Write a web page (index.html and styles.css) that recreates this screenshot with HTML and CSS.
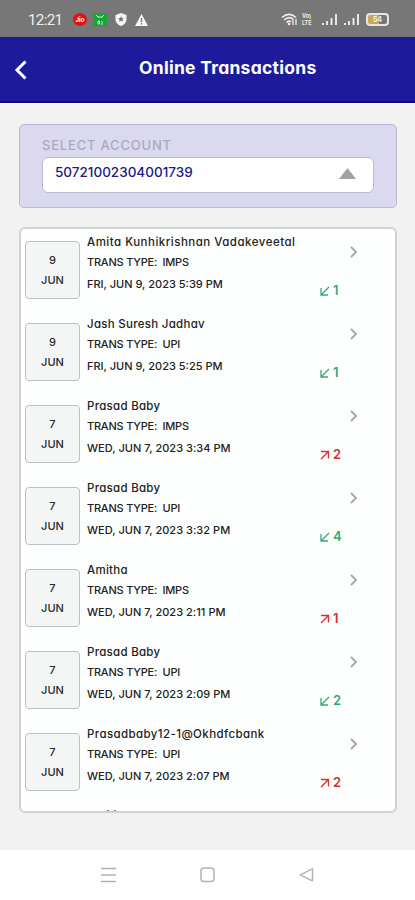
FILE: index.html
```html
<!DOCTYPE html>
<html lang="en">
<head>
<meta charset="utf-8">
<title>Online Transactions</title>
<link rel="stylesheet" href="styles.css">
</head>
<body>
<svg width="0" height="0" class="defs">
  <symbol id="chevron" viewBox="0 0 10 14"><path d="M2 2l5 5-5 5" fill="none" stroke="#a5a5a5" stroke-width="1.8"/></symbol>
  <symbol id="in" viewBox="0 0 10 10"><path d="M9 1L1.5 8.500M1 2v7h7" fill="none" stroke="currentColor" stroke-width="1.3"/></symbol>
  <symbol id="out" viewBox="0 0 10 10"><path d="M1 9l7.500-7.500M1 1.500h7.500v7" fill="none" stroke="currentColor" stroke-width="1.3"/></symbol>
  <symbol id="signal" viewBox="0 0 17 13"><path d="M1 10v2M5 8v4M9.500 5v7M14 1v11" fill="none" stroke="#f2f2f2" stroke-width="1.8"/></symbol>
</svg>
<div class="status">
  <span class="clock">12:21</span>
  <span class="jio">Jio</span>
  <span class="green"><svg width="14" height="14" viewBox="0 0 14 14"><path d="M3 2l3 3M11 2L8 5M5 4h4M5 8v3h1.500V8zM9 8v4" fill="none" stroke="#b4f0bd" stroke-width="1"/></svg></span>
  <svg class="shield" width="12" height="13" viewBox="0 0 12 13"><path d="M6 0l5.500 2v4.500C11.500 9.500 9 12 6 13 3 12 .5 9.500.5 6.500V2z" fill="#f7f7f7"/><path d="M6 3.200l.9 1.800 2 .3-1.400 1.400.3 2L6 7.800l-1.800.9.3-2-1.400-1.400 2-.3z" fill="#777"/></svg>
  <svg width="13" height="12" viewBox="0 0 13 12"><path d="M6.500 0L13 12H0z" fill="#f7f7f7"/><path d="M6.500 4v4M6.500 9v1.500" stroke="#777" stroke-width="1.300"/></svg>
  <span class="right">
    <svg width="17" height="13" viewBox="0 0 17 13"><g fill="none" stroke="#eee" stroke-width="1.600"><path d="M1 4.500Q8 -1.800 15 4.500M3.200 7Q8 2.500 12.500 6.500M5.500 9.500Q8 7 10 9"/></g><circle cx="8" cy="11" r="1.300" fill="#eee"/><path d="M12 12V7M15 6v6" stroke="#eee" stroke-width="1.300"/></svg>
    <span class="volte"><span>Vo)</span><span>LTE</span></span>
    <svg width="17" height="13"><use href="#signal"/></svg>
    <svg class="sig2" width="17" height="13"><use href="#signal"/></svg>
    <span class="battery"><span>54</span></span>
  </span>
</div>
<header>
  <svg width="14" height="20" viewBox="0 0 14 20"><path d="M11.500 1.500L3 10l8.500 8.500" fill="none" stroke="#fff" stroke-width="3"/></svg>
  <h1>Online Transactions</h1>
</header>
<main>
  <section class="account">
    <label>SELECT ACCOUNT</label>
    <div class="select"><span>50721002304001739</span><svg width="17" height="11" viewBox="0 0 17 11"><path d="M8.500 0L17 11H0z" fill="#a1a1a1"/></svg></div>
  </section>
  <section class="list">
    <article><div class="date"><span>9</span><span>JUN</span></div><div class="info"><p class="name n1">Amita Kunhikrishnan Vadakeveetal</p><p class="type">TRANS TYPE:&nbsp; IMPS</p><p class="time fri">FRI, JUN 9, 2023 5:39 PM</p></div><div class="side"><svg class="chev"><use href="#chevron"/></svg><span class="amt in"><svg><use href="#in"/></svg>1</span></div></article>
    <article><div class="date"><span>9</span><span>JUN</span></div><div class="info"><p class="name">Jash Suresh Jadhav</p><p class="type">TRANS TYPE:&nbsp; UPI</p><p class="time fri">FRI, JUN 9, 2023 5:25 PM</p></div><div class="side"><svg class="chev"><use href="#chevron"/></svg><span class="amt in"><svg><use href="#in"/></svg>1</span></div></article>
    <article><div class="date"><span>7</span><span>JUN</span></div><div class="info"><p class="name">Prasad Baby</p><p class="type">TRANS TYPE:&nbsp; IMPS</p><p class="time">WED, JUN 7, 2023 3:34 PM</p></div><div class="side"><svg class="chev"><use href="#chevron"/></svg><span class="amt out"><svg><use href="#out"/></svg>2</span></div></article>
    <article><div class="date"><span>7</span><span>JUN</span></div><div class="info"><p class="name">Prasad Baby</p><p class="type">TRANS TYPE:&nbsp; UPI</p><p class="time">WED, JUN 7, 2023 3:32 PM</p></div><div class="side"><svg class="chev"><use href="#chevron"/></svg><span class="amt in"><svg><use href="#in"/></svg>4</span></div></article>
    <article><div class="date"><span>7</span><span>JUN</span></div><div class="info"><p class="name">Amitha</p><p class="type">TRANS TYPE:&nbsp; IMPS</p><p class="time">WED, JUN 7, 2023 2:11 PM</p></div><div class="side"><svg class="chev"><use href="#chevron"/></svg><span class="amt out"><svg><use href="#out"/></svg>1</span></div></article>
    <article><div class="date"><span>7</span><span>JUN</span></div><div class="info"><p class="name">Prasad Baby</p><p class="type">TRANS TYPE:&nbsp; UPI</p><p class="time">WED, JUN 7, 2023 2:09 PM</p></div><div class="side"><svg class="chev"><use href="#chevron"/></svg><span class="amt in"><svg><use href="#in"/></svg>2</span></div></article>
    <article><div class="date"><span>7</span><span>JUN</span></div><div class="info"><p class="name n7">Prasadbaby12-1@Okhdfcbank</p><p class="type">TRANS TYPE:&nbsp; UPI</p><p class="time">WED, JUN 7, 2023 2:07 PM</p></div><div class="side"><svg class="chev"><use href="#chevron"/></svg><span class="amt out"><svg><use href="#out"/></svg>2</span></div></article>
    <div class="more"><i></i><i></i></div>
  </section>
</main>
<nav>
  <svg width="15" height="16" viewBox="0 0 15 16"><path d="M0 1.500h15M0 8h15M0 14.500h15" stroke="#b2b2b2" stroke-width="1.500"/></svg>
  <svg width="15" height="16" viewBox="0 0 15 16"><rect x="1" y="1" width="13" height="13.500" rx="3" fill="none" stroke="#b2b2b2" stroke-width="1.500"/></svg>
  <svg width="15" height="16" viewBox="0 0 15 16"><path d="M13.500 1.800v12L1.200 7.800z" fill="none" stroke="#b2b2b2" stroke-width="1.400" stroke-linejoin="round"/></svg>
</nav>
</body>
</html>
```
FILE: styles.css
```css
* { box-sizing: border-box; }
body { margin: 0; width: 415px; height: 900px; overflow: hidden; display: flex; flex-direction: column; background: #f1f1f1; font-family: Inter, "Liberation Sans", sans-serif; font-feature-settings: "cv11"; }
p, h1 { margin: 0; }
svg { display: block; flex: none; }
.defs { position: absolute; }
.status { height: 37px; flex: none; background: #777; display: flex; align-items: center; padding: 2px 26px 0 28px; }
.clock { font: 15px Roboto, sans-serif; color: #eee; width: 45px; letter-spacing: -.6px; }
.jio { width: 14px; height: 13px; border-radius: 50%; background: #df1018; color: #fff; font-size: 6px; font-weight: 700; line-height: 13px; text-align: center; }
.green { margin: 0 8px 0 6px; width: 14px; height: 13px; border-radius: 2px; background: #18a53c; }
.shield { margin-right: 8px; }
.right { margin-left: auto; display: flex; align-items: center; }
.volte { margin: 0 6px 0 4px; width: 14px; display: flex; flex-direction: column; font-size: 5.5px; font-weight: 700; line-height: 7px; color: #eee; }
.sig2 { margin-left: 5px; }
.battery { margin-left: 5px; width: 23px; height: 13px; border: 2px solid #e6e6e6; border-radius: 4px; background: linear-gradient(90deg, #c9a957 60%, #777 60%); }
.battery span { display: block; font-size: 7px; line-height: 9px; font-weight: 700; color: #eee; text-align: center; }
header { height: 66px; flex: none; background: #1d1b9b; border-bottom: 2px solid #0b0786; display: flex; align-items: center; padding-left: 14px; }
header svg { margin-top: 2px; }
h1 { margin-left: 111px; margin-top: -2px; color: #fff; font-size: 17.500px; font-weight: 700; line-height: 24px; letter-spacing: .27px; white-space: nowrap; }
main { flex: 1; padding: 20px 18px 0 19px; border-top: 1px solid #fff; }
.account { height: 84px; border: 1px solid #bab7d9; border-radius: 5px; background: #dad9ef; padding: 12px 22px 0; }
label { display: block; height: 20px; line-height: 17px; font-size: 13px; font-weight: 500; letter-spacing: .8px; color: #aaa9bd; }
.select { height: 36px; border: 1px solid #bbbac9; border-radius: 6px; background: #fff; display: flex; justify-content: space-between; padding: 0 17px 0 12px; font-size: 13.500px; font-weight: 500; line-height: 29px; color: #201a82; }
.select svg { margin-top: 10px; }
.list { margin-top: 19px; height: 586px; border: 2px solid #d1d3d3; border-radius: 6px; background: #fdfefe; overflow: hidden; padding: 5px 4px 0; display: flex; flex-direction: column; }
article { height: 82.050px; flex: none; display: flex; }
.date { margin-top: 7px; width: 55px; height: 58px; border: 1px solid #bfc1c1; border-radius: 4px; background: #f4f6f6; display: flex; flex-direction: column; align-items: center; padding-top: 8px; font-size: 11px; font-weight: 500; line-height: 20px; color: #292929; }
.info { margin-left: 7px; width: 233px; color: #222; font-size: 11px; font-weight: 500; line-height: 20px; white-space: nowrap; }
.info p { height: 20px; }
.info .name { margin-top: -2px; font-size: 11.500px; letter-spacing: .28px; }
.info .n1 { letter-spacing: .49px; }
.info .n7 { letter-spacing: .4px; }
.type { letter-spacing: -.22px; }
.info .time { margin-top: 2px; letter-spacing: .03px; }
.info .fri { letter-spacing: 0; }
.side { width: 42px; }
.chev { width: 10px; height: 14px; margin: 11px 0 0 29px; }
.amt { margin-top: 22px; display: flex; align-items: center; gap: 3px; height: 18px; font-size: 13px; font-weight: 600; }
.amt svg { width: 10px; height: 10px; margin-top: 1px; }
.in { color: #35aa75; }
.out { color: #d7302e; }
.more { display: flex; gap: 5px; margin: 2px 0 0 82px; }
.more i { width: 2px; height: 2px; background: #555; border-radius: 1px; }
nav { height: 50px; flex: none; background: #fff; display: flex; justify-content: space-between; padding: 17px 101px 0; }
```
